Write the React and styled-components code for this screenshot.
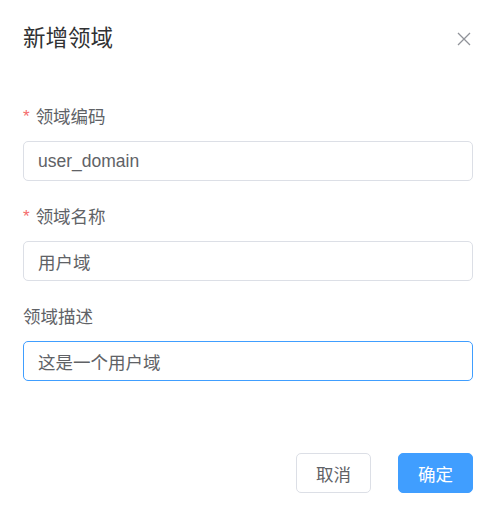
import React from "react";
import styled, { createGlobalStyle } from "styled-components";

const Global = createGlobalStyle`
  html, body { margin: 0; padding: 0; background: #fff; }
  body { font-family: "Liberation Sans", "Noto Sans CJK SC", sans-serif; }
  * { box-sizing: border-box; }
`;

const Dialog = styled.div`
  width: 497px;
  height: 516px;
  background: #fff;
  display: flex;
  flex-direction: column;
  padding: 0 24px 23px 23px;
`;

const Header = styled.div`
  display: flex;
  align-items: center;
  justify-content: space-between;
  height: 30px;
  margin-top: 24px;
`;

const Title = styled.h2`
  margin: 0;
  font-size: 22.5px;
  line-height: 30px;
  font-weight: 400;
  color: #303133;
`;

const Close = styled.button`
  border: none;
  background: none;
  padding: 0;
  width: 14px;
  height: 14px;
  margin-right: 2px;
  display: flex;
  cursor: pointer;
`;

const Form = styled.form`
  display: flex;
  flex-direction: column;
  margin-top: 48px;
`;

const Item = styled.div`
  display: flex;
  flex-direction: column;
  margin-bottom: 21px;
`;

const Label = styled.label`
  font-size: 17.5px;
  line-height: 30px;
  color: #606266;
  margin-bottom: 9px;
  display: flex;
  align-items: center;
`;

const Star = styled.span`
  color: #f56c6c;
  margin-right: 6px;
  font-size: 17px;
`;

const Input = styled.input`
  height: 40px;
  width: 100%;
  border: 1px solid ${(p) => (p.$focused ? "#409eff" : "#dcdfe6")};
  border-radius: 5px;
  padding: 0 14px;
  font-family: "Liberation Sans", "Noto Sans CJK SC", sans-serif;
  font-size: 17.5px;
  color: #606266;
  outline: none;
  background: #fff;
`;

const Footer = styled.div`
  margin-top: auto;
  display: flex;
  justify-content: flex-end;
  gap: 27px;
`;

const Button = styled.button`
  width: 75px;
  height: 40px;
  border-radius: 5px;
  font-family: "Liberation Sans", "Noto Sans CJK SC", sans-serif;
  font-size: 17.5px;
  border: 1px solid ${(p) => (p.$primary ? "#409eff" : "#dcdfe6")};
  background: ${(p) => (p.$primary ? "#409eff" : "#fff")};
  color: ${(p) => (p.$primary ? "#fff" : "#606266")};
  padding: 0;
  cursor: pointer;
`;

const fields = [
  { label: "领域编码", value: "user_domain", required: true },
  { label: "领域名称", value: "用户域", required: true },
  { label: "领域描述", value: "这是一个用户域", focused: true },
];

export default function App() {
  return (
    <>
      <Global />
      <Dialog>
        <Header>
          <Title>新增领域</Title>
          <Close aria-label="close">
            <svg width="14" height="14" viewBox="0 0 14 14">
              <path d="M1 1L13 13M13 1L1 13" stroke="#909399" strokeWidth="1.3" fill="none" />
            </svg>
          </Close>
        </Header>
        <Form onSubmit={(e) => e.preventDefault()}>
          {fields.map((f) => (
            <Item key={f.label}>
              <Label>
                {f.required && <Star>*</Star>}
                {f.label}
              </Label>
              <Input defaultValue={f.value} $focused={f.focused} />
            </Item>
          ))}
        </Form>
        <Footer>
          <Button>取消</Button>
          <Button $primary>确定</Button>
        </Footer>
      </Dialog>
    </>
  );
}
